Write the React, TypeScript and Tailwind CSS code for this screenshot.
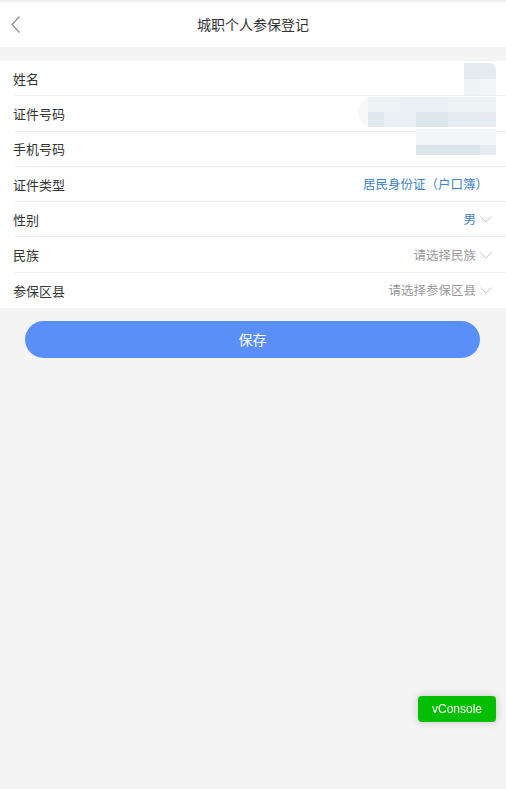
import React from "react";

const font = { fontFamily: '"Noto Sans CJK SC", "Noto Sans", sans-serif' };

function Chevron() {
  return (
    <svg width="12" height="7" viewBox="0 0 12 7" className="ml-[4px] shrink-0">
      <polyline points="0.5,0.5 6,6 11.5,0.5" fill="none" stroke="#c8c8c8" strokeWidth="1" />
    </svg>
  );
}

type Row = { label: string; value?: string; tone?: "blue" | "gray"; arrow?: boolean };

const rows: Row[] = [
  { label: "姓名" },
  { label: "证件号码" },
  { label: "手机号码" },
  { label: "证件类型", value: "居民身份证（户口簿）", tone: "blue" },
  { label: "性别", value: "男", tone: "blue", arrow: true },
  { label: "民族", value: "请选择民族", tone: "gray", arrow: true },
  { label: "参保区县", value: "请选择参保区县", tone: "gray", arrow: true },
];

function Mosaic() {
  return (
    <svg
      className="absolute left-0 top-0 pointer-events-none"
      width="506"
      height="100"
      viewBox="0 0 506 100"
    >
      <path d="M464 2 H488 Q496 2 496 10 V18 H464 Z" fill="#e3ebf0" />
      <rect x="464" y="18" width="32" height="16" fill="#eef3f6" />
      <rect x="480" y="18" width="16" height="16" fill="#f3f6f8" />
      <ellipse cx="372" cy="51" rx="14" ry="15" fill="#f6f8fa" />
      <rect x="368" y="36" width="128" height="15" fill="#edf2f5" />
      <rect x="400" y="36" width="48" height="15" fill="#eaf0f4" />
      <rect x="368" y="51" width="16" height="15" fill="#dfe8ee" />
      <rect x="384" y="51" width="32" height="15" fill="#e9eff3" />
      <rect x="416" y="51" width="32" height="15" fill="#dce6ed" />
      <rect x="448" y="51" width="48" height="15" fill="#e4ecf1" />
      <rect x="416" y="68" width="80" height="16" fill="#f3f6f8" />
      <rect x="416" y="84" width="80" height="10" fill="#dbe5ec" />
      <rect x="480" y="84" width="16" height="10" fill="#e3ebf0" />
    </svg>
  );
}

export default function App() {
  return (
    <div className="min-h-[789px] bg-[#f4f4f4] text-[#333]" style={font}>
      <div className="relative flex h-[47px] items-center justify-center bg-white border-t-[2px] border-[#f0f0f0]">
        <svg width="10" height="17" viewBox="0 0 10 17" className="absolute left-[11px] top-[14px]">
          <polyline points="8.5,0.5 1,8.5 8.5,16.5" fill="none" stroke="#8a8a8a" strokeWidth="1.2" />
        </svg>
        <span className="text-[14px] text-[#333]">城职个人参保登记</span>
      </div>

      <div className="relative mt-[14px] bg-white">
        {rows.map((r, i) => (
          <div
            key={r.label}
            className={
              r.arrow
                ? "relative flex h-[35.3px] items-center pl-[13px] pr-[14px]"
                : "relative flex h-[35.3px] items-center pl-[13px] pr-[18px]"
            }
          >
            <span className="text-[13px] text-[#333]">{r.label}</span>
            <div className="ml-auto flex items-center">
              {r.value && (
                <span
                  className={
                    r.tone === "blue"
                      ? "text-[12.5px] text-[#3b7fc4]"
                      : "text-[12.5px] text-[#999]"
                  }
                >
                  {r.value}
                </span>
              )}
              {r.arrow && <Chevron />}
            </div>
            {i < rows.length - 1 && (
              <div className="absolute bottom-0 left-[14px] right-0 h-px bg-[#efefef]" />
            )}
          </div>
        ))}
        <Mosaic />
      </div>

      <div className="mt-[13px] pl-[25px] pr-[26px]">
        <button className="flex h-[37px] w-full items-center justify-center rounded-full bg-[#5a8ef8] text-[14px] text-white">
          保存
        </button>
      </div>

      <div
        className="fixed right-[10px] bottom-[67px] flex h-[26px] w-[78px] items-center justify-center rounded-[4px] bg-[#04be02] text-[12px] text-white shadow-[0_0_8px_rgba(0,0,0,0.2)]"
        style={{ fontFamily: '"Liberation Sans", Arial, sans-serif' }}
      >
        vConsole
      </div>
    </div>
  );
}
